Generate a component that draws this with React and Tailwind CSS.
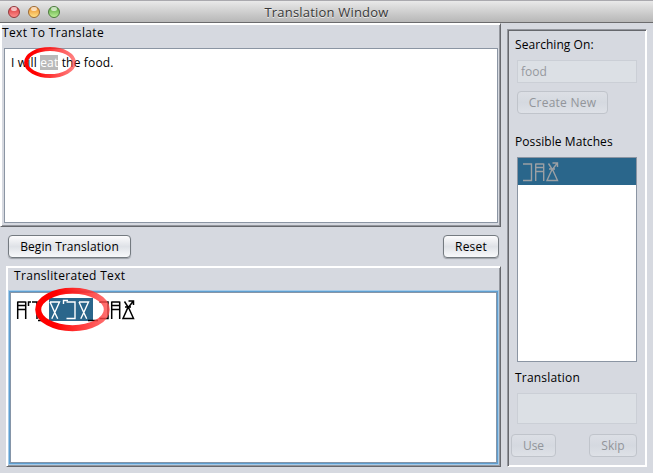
const font = "font-['Open_Sans','Noto_Sans',sans-serif]";
const raised = "border p-px border-t-white border-l-white border-r-[#66686d] border-b-[#66686d] shadow-[inset_1px_1px_0_#ffffff,inset_-1px_-1px_0_#94979e]";
const lowered = "border p-px border-t-[#94979e] border-l-[#94979e] border-r-white border-b-white shadow-[inset_1px_1px_0_#66686d,inset_-1px_-1px_0_#ffffff]";

function Btn({ children, className = "", disabled }) {
  const look = disabled
    ? "border-[#c0c4cb] text-[#92959a] from-[#dcdfe5] via-[#d5d9e0] to-[#dee1e7]"
    : "border-[#747a80] text-black from-[#fcfcfd] via-[#dfe2e7] to-[#f8f9fb] shadow-[0_1px_1px_#9da1a8]";
  return (
    <button className={`flex items-center justify-center rounded-[4px] border bg-linear-to-b text-[12px] leading-none whitespace-nowrap ${look} ${className}`}>
      {children}
    </button>
  );
}

function Light({ className }) {
  return (
    <span className={`relative block size-[12px] rounded-full border ${className}`}>
      <span className="absolute top-0 left-[2px] h-[4px] w-[6px] rounded-full bg-white/65" />
    </span>
  );
}

const ladder = "M.7 19V1.500M8.700 19V1.500M.7 2H8.700M.7 5.500H8.700M.7 9.500H8.700";
const bracket = "M0 2H8.500V18.500H0";
const flask = "M3 1.500L7.500 8.500L12 18.500H1.500L6 8.500L11.500 1.500M3.500 7H9.500M7 1H12V5";
const hourglass = "M1 2H10.500L6 12L2.800 18.800M1 2L5.500 12L8.700 18.800";

function Source() {
  return (
    <section className={`relative h-[204px] w-[501px] pl-[3px] ${raised}`}>
      <h2 className="-ml-[2px] h-[23px] pt-px text-[12px] leading-[13px] tracking-[0.36px]">Text To Translate</h2>
      <div className="h-[175px] w-[494px] border border-[#8b95a3] bg-white pt-[6px] pl-[6px] text-[12px] leading-[15px] whitespace-pre">
        <p className="tracking-[0.17px]">I will <span className="inline-block h-[15px] bg-[#b9b9b9] text-white">eat</span> the food.</p>
      </div>
      <svg className="absolute top-[22px] left-[22px]" width="55" height="34" viewBox="23 46 55 34" fill="none">
        <defs>
          <linearGradient id="ringA"><stop offset=".2" stopColor="#ff0000" /><stop offset="1" stopColor="#ff3b3b" stopOpacity=".65" /></linearGradient>
        </defs>
        <ellipse cx="50" cy="62.500" rx="24" ry="13.500" stroke="url(#ringA)" strokeWidth="3.800" />
      </svg>
    </section>
  );
}

function Result() {
  return (
    <section className={`ml-[6px] h-[201px] w-[495px] ${raised}`}>
      <h2 className="h-[22px] pt-px pl-[6px] text-[12px] leading-[13px] tracking-[0.32px]">Transliterated Text</h2>
      <div className="h-[175px] border border-[#a5cbe9]">
        <div className="h-full border border-[#5f9fd0]">
          <div className="relative h-full border border-[#8595a8] bg-white">
            <svg className="absolute -top-[6px] left-[3px]" width="124" height="48" viewBox="14 287 124 48" fill="none" strokeWidth="1.500">
              <defs>
                <linearGradient id="ringB"><stop offset=".25" stopColor="#ff0000" /><stop offset="1" stopColor="#ff4b4b" stopOpacity=".8" /></linearGradient>
              </defs>
              <path fill="#2a668b" d="M49 298h44v23H49z" />
              <g stroke="black">
                <path transform="translate(17 300)" d={ladder} />
                <path d="M28.500 306V302H31M32 302H37V319M38 320.500H48M88 320.500H98" />
                <path transform="translate(99.500 300)" d={bracket} />
                <path transform="translate(111 300)" d={ladder} />
                <path transform="translate(121.500 300)" d={flask} />
              </g>
              <g stroke="white" strokeWidth="1.400">
                <path transform="translate(49 300)" d={hourglass} />
                <path d="M63.500 304V300.500H68" />
                <path transform="translate(66.500 300)" d={bracket} />
                <path transform="translate(78 300)" d={hourglass} />
              </g>
              <ellipse cx="72.500" cy="309.500" rx="34.300" ry="18.700" stroke="url(#ringB)" strokeWidth="6" />
            </svg>
          </div>
        </div>
      </div>
    </section>
  );
}

function Sidebar() {
  return (
    <aside className={`mt-[6px] ml-[6px] flex h-[438px] w-[140px] flex-col pl-[9px] ${lowered}`}>
      <h2 className="-ml-[2px] mt-[7px] text-[12px] leading-[14px] tracking-[0.06px]">Searching On:</h2>
      <div className="mt-[8px] h-[23px] w-[120px] border border-[#cbcfd6] bg-[#dce0e5] pl-[3px] text-[12px] leading-[21px] text-[#96999e]">food</div>
      <Btn disabled className="mt-[8px] h-[23px] w-[91px] tracking-[0.24px]">Create New</Btn>
      <h2 className="-ml-[2px] mt-[21px] text-[12px] leading-[14px] tracking-[0.08px]">Possible Matches</h2>
      <div className="mt-[8px] h-[205px] w-[120px] border border-[#8b95a3] bg-white">
        <div className="h-[27px] bg-[#2a668b] pt-[4px] pl-[5px]">
          <svg width="40" height="22" viewBox="0 0 40 22" fill="none" stroke="#9ca0a4" strokeWidth="1.400">
            <path d={bracket} />
            <path transform="translate(12 0)" d={ladder} />
            <path transform="translate(22.500 0)" d={flask} />
          </svg>
        </div>
      </div>
      <h2 className="-ml-[2px] mt-[9px] text-[12px] leading-[14px] tracking-[0.2px]">Translation</h2>
      <div className="mt-[8px] h-[31px] w-[120px] border border-[#cbcfd6] bg-[#dce0e5]" />
      <div className="mt-[10px] -ml-[6px] flex w-[126px] justify-between">
        <Btn disabled className="h-[23px] w-[45px]">Use</Btn>
        <Btn disabled className="h-[23px] w-[48px]">Skip</Btn>
      </div>
    </aside>
  );
}

export default function App() {
  return (
    <div className={`flex h-[473px] w-[653px] flex-col overflow-hidden bg-[#d6d9e0] text-black ${font}`}>
      <header className="grid h-[23px] shrink-0 grid-cols-[1fr_auto_1fr] items-center border-t border-b border-t-[#aaa9ae] border-b-[#6b6b6d] bg-linear-to-b from-[#e9e9e9] to-[#b7b7b7]">
        <div className="flex gap-[8px] pl-[8px]">
          <Light className="border-[#91383b] bg-linear-to-b from-[#d52e37] to-[#ff8b8b]" />
          <Light className="border-[#9c6831] bg-linear-to-b from-[#e88b20] to-[#ffe184]" />
          <Light className="border-[#4a793b] bg-linear-to-b from-[#58a43d] to-[#b9ef95]" />
        </div>
        <h1 className="pt-px text-[13px] leading-none tracking-[0.2px] text-[#383838] [text-shadow:0_1px_0_#eeeeee]">Translation Window</h1>
      </header>
      <main className="flex">
        <div className="flex flex-col">
          <Source />
          <div className="flex h-[39px] w-[499px] items-start justify-between pt-[8px] pl-[8px]">
            <Btn className="h-[23px] w-[123px] tracking-[0.08px]">Begin Translation</Btn>
            <Btn className="h-[23px] w-[56px] tracking-[0.2px]">Reset</Btn>
          </div>
          <Result />
        </div>
        <Sidebar />
      </main>
    </div>
  );
}
